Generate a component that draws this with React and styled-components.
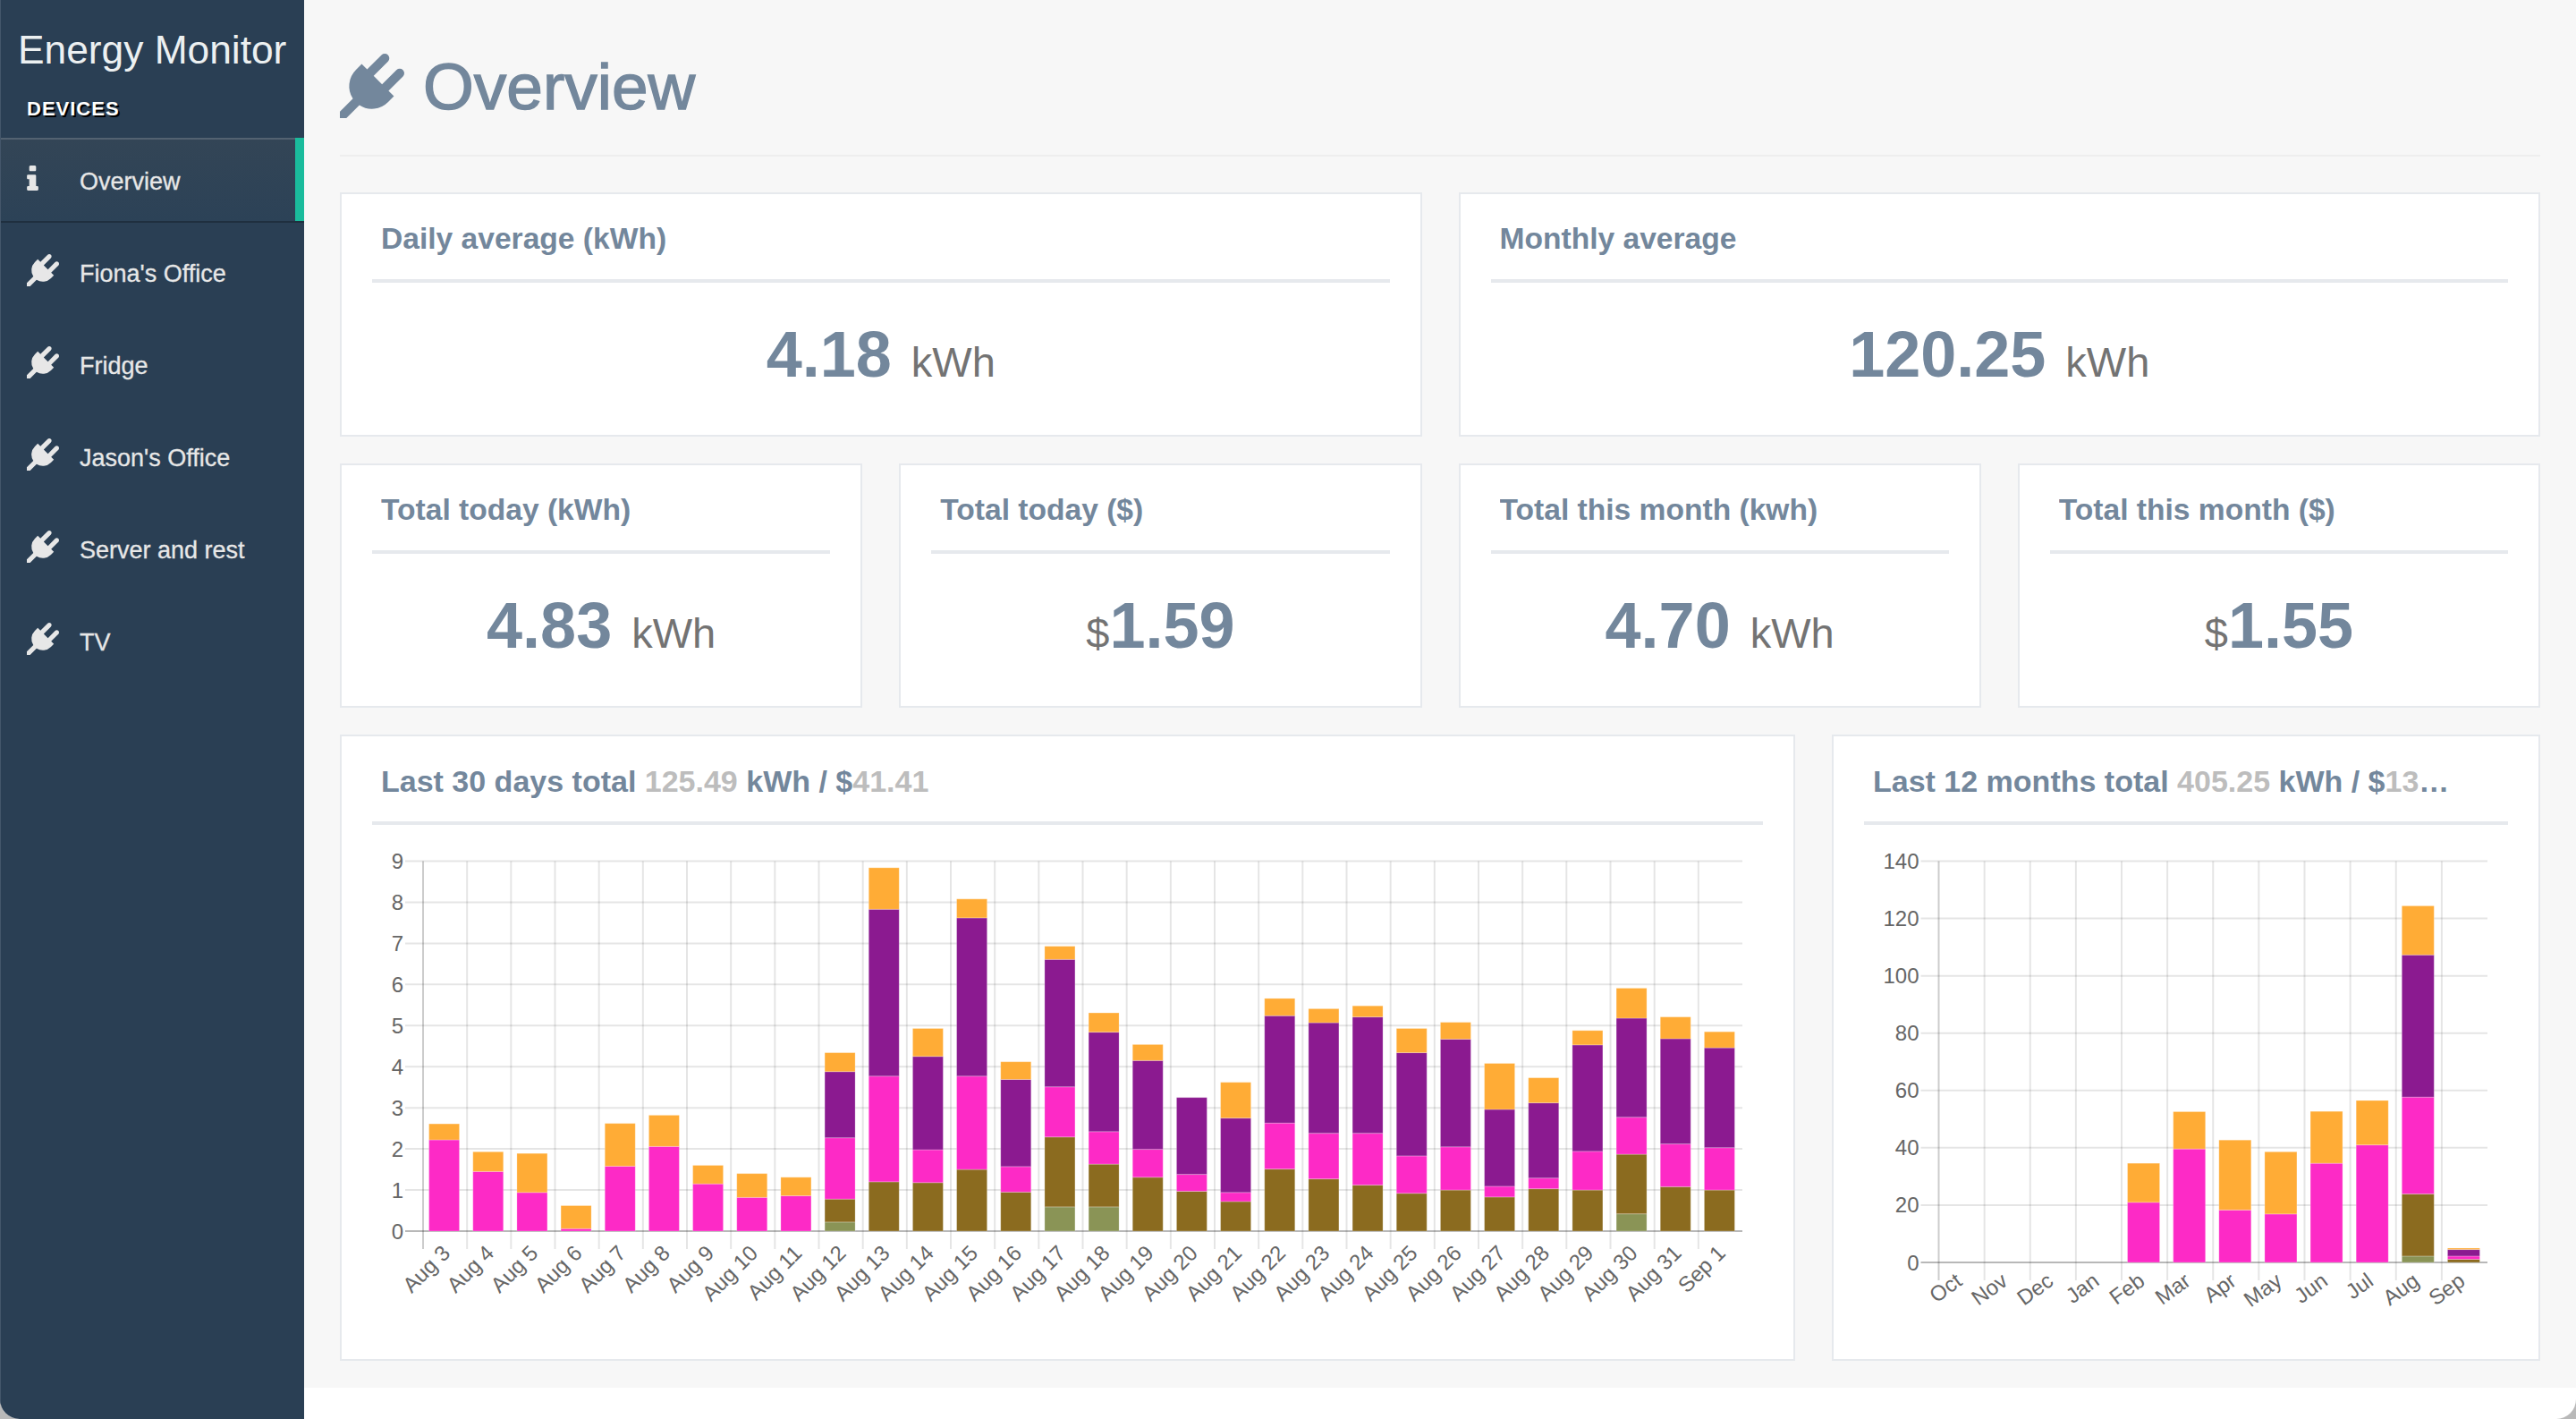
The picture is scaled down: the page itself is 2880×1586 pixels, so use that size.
import React from 'react'
import styled, { createGlobalStyle } from 'styled-components'

const PLUG = 'M1755 453q37 38 37 90.5t-37 90.5l-401 400 150 150-160 160q-163 163-389.5 186.5t-411.5-100.5l-362 362h-181v-181l362-362q-124-185-100.5-411.5t186.5-389.5l160-160 150 150 400-401q38-37 91-37t90 37 37 90.5-37 90.5l-400 401 234 234 401-400q38-37 91-37t90 37z'
const INFO = 'M1216 1344v128q0 26-19 45t-45 19h-512q-26 0-45-19t-19-45v-128q0-26 19-45t45-19h64v-384h-64q-26 0-45-19t-19-45v-128q0-26 19-45t45-19h384q26 0 45 19t19 45v576h64q26 0 45 19t19 45zm-128-1152v192q0 26-19 45t-45 19h-256q-26 0-45-19t-19-45v-192q0-26 19-45t45-19h256q26 0 45 19t19 45z'

const SERIES = ['#8a9456', '#8b6b1f', '#fd2ac6', '#8b1a90', '#ffac36']

// cumulative tops of each stack: green, brown, magenta, purple, orange
const DAYS = [
    ['Aug 3', 0, 0, 2.22, 2.22, 2.61],
    ['Aug 4', 0, 0, 1.45, 1.45, 1.93],
    ['Aug 5', 0, 0, 0.94, 0.94, 1.89],
    ['Aug 6', 0, 0, 0.06, 0.06, 0.62],
    ['Aug 7', 0, 0, 1.58, 1.58, 2.62],
    ['Aug 8', 0, 0, 2.06, 2.06, 2.82],
    ['Aug 9', 0, 0, 1.15, 1.15, 1.6],
    ['Aug 10', 0, 0, 0.82, 0.82, 1.4],
    ['Aug 11', 0, 0, 0.86, 0.86, 1.31],
    ['Aug 12', 0.22, 0.78, 2.27, 3.88, 4.34],
    ['Aug 13', 0, 1.2, 3.77, 7.83, 8.84],
    ['Aug 14', 0, 1.18, 1.98, 4.25, 4.93],
    ['Aug 15', 0, 1.5, 3.77, 7.62, 8.08],
    ['Aug 16', 0, 0.95, 1.57, 3.69, 4.12],
    ['Aug 17', 0.59, 2.29, 3.51, 6.61, 6.93],
    ['Aug 18', 0.59, 1.63, 2.42, 4.84, 5.31],
    ['Aug 19', 0, 1.31, 1.99, 4.15, 4.54],
    ['Aug 20', 0, 0.97, 1.38, 3.25, 3.25],
    ['Aug 21', 0, 0.72, 0.94, 2.75, 3.62],
    ['Aug 22', 0, 1.51, 2.63, 5.24, 5.66],
    ['Aug 23', 0, 1.27, 2.38, 5.07, 5.41],
    ['Aug 24', 0, 1.12, 2.38, 5.21, 5.48],
    ['Aug 25', 0, 0.92, 1.83, 4.34, 4.93],
    ['Aug 26', 0, 1, 2.05, 4.67, 5.08],
    ['Aug 27', 0, 0.83, 1.09, 2.96, 4.08],
    ['Aug 28', 0, 1.03, 1.29, 3.12, 3.73],
    ['Aug 29', 0, 1, 1.94, 4.53, 4.88],
    ['Aug 30', 0.42, 1.87, 2.77, 5.18, 5.91],
    ['Aug 31', 0, 1.08, 2.12, 4.68, 5.21],
    ['Sep 1', 0, 1, 2.03, 4.46, 4.85],
]

const MONTHS = [
    ['Oct', 0, 0, 0, 0, 0],
    ['Nov', 0, 0, 0, 0, 0],
    ['Dec', 0, 0, 0, 0, 0],
    ['Jan', 0, 0, 0, 0, 0],
    ['Feb', 0, 0, 20.96, 20.96, 34.6],
    ['Mar', 0, 0, 39.6, 39.6, 52.6],
    ['Apr', 0, 0, 18.3, 18.3, 42.7],
    ['May', 0, 0, 16.9, 16.9, 38.6],
    ['Jun', 0, 0, 34.6, 34.6, 52.7],
    ['Jul', 0, 0, 41, 41, 56.5],
    ['Aug', 2.2, 23.9, 57.7, 107.3, 124.4],
    ['Sep', 0, 1.1, 2.2, 4.5, 5],
]

const DEVICES = ["Fiona's Office", 'Fridge', "Jason's Office", 'Server and rest', 'TV']

function StackedChart({ rows, width, height, left, right, zero, max, step, barWidth, angle, labelDx, labelDy }) {
    const top = 40.5
    const pitch = (right - left) / rows.length
    const scale = (zero - top) / max
    const ticks = []
    for (let v = 0; v <= max; v += step) ticks.push(v)
    return (
        <ChartSvg width={width} height={height} viewBox={`0 0 ${width} ${height}`}>
            {ticks.map((v) => (
                <g key={v}>
                    <line
                        x1={left - 20}
                        x2={right}
                        y1={zero - v * scale}
                        y2={zero - v * scale}
                        stroke={v === 0 ? 'rgba(0,0,0,0.28)' : 'rgba(0,0,0,0.1)'}
                        strokeWidth="2"
                    />
                    <AxisText x={left - 22} y={zero - v * scale + 8.5} textAnchor="end">{v}</AxisText>
                </g>
            ))}
            {rows.map((row, i) => (
                <line
                    key={row[0]}
                    x1={left + pitch * i}
                    x2={left + pitch * i}
                    y1={top}
                    y2={zero + 20}
                    stroke={i === 0 ? 'rgba(0,0,0,0.2)' : 'rgba(0,0,0,0.1)'}
                    strokeWidth="2"
                />
            ))}
            {rows.map((row, i) => {
                const cx = left + pitch * (i + 0.5) - 1
                return (
                    <g key={row[0]}>
                        {SERIES.map((color, s) => {
                            const from = s === 0 ? 0 : row[s]
                            const to = row[s + 1]
                            if (to <= from) return null
                            return (
                                <rect
                                    key={color}
                                    x={cx - barWidth / 2}
                                    y={zero - to * scale}
                                    width={barWidth}
                                    height={(to - from) * scale}
                                    fill={color}
                                    stroke="rgba(255,255,255,0.25)"
                                    strokeWidth="1"
                                />
                            )
                        })}
                        <AxisText
                            textAnchor="end"
                            transform={`translate(${cx + labelDx} ${zero + labelDy}) rotate(${angle})`}
                        >
                            {row[0]}
                        </AxisText>
                    </g>
                )
            })}
        </ChartSvg>
    )
}

function StatPanel({ title, value, unit, prefix }) {
    return (
        <Panel $height={273}>
            <PanelHead>
                <PanelTitle>{title}</PanelTitle>
            </PanelHead>
            <Stat>
                {prefix && <Unit>{prefix}</Unit>}
                <Figure>{value}</Figure>
                {unit && <Unit $spaced>{unit}</Unit>}
            </Stat>
        </Panel>
    )
}

export default function App() {
    return (
        <>
            <GlobalStyle />
            <Shell>
                <Sidebar>
                    <Brand>Energy Monitor</Brand>
                    <MenuHeading>DEVICES</MenuHeading>
                    <Menu>
                        <MenuItem $active>
                            <IconSlot>
                                <svg width="13" height="28" viewBox="576 128 640 1408" fill="#e7e7e7">
                                    <path d={INFO} />
                                </svg>
                            </IconSlot>
                            Overview
                        </MenuItem>
                        {DEVICES.map((name) => (
                            <MenuItem key={name}>
                                <IconSlot>
                                    <svg width="36" height="36" viewBox="0 0 1792 1792" fill="#e7e7e7">
                                        <path d={PLUG} />
                                    </svg>
                                </IconSlot>
                                {name}
                            </MenuItem>
                        ))}
                    </Menu>
                </Sidebar>
                <Main>
                    <Content>
                        <PageHeader>
                            <HeaderIcon width="72" height="72" viewBox="0 0 1792 1792" fill="#73879c">
                                <path d={PLUG} />
                            </HeaderIcon>
                            <PageTitle>Overview</PageTitle>
                        </PageHeader>
                        <TopRow>
                            <StatPanel title="Daily average (kWh)" value="4.18" unit="kWh" />
                            <StatPanel title="Monthly average" value="120.25" unit="kWh" />
                        </TopRow>
                        <TotalsRow>
                            <StatPanel title="Total today (kWh)" value="4.83" unit="kWh" />
                            <StatPanel title="Total today ($)" value="1.59" prefix="$" />
                            <StatPanel title="Total this month (kwh)" value="4.70" unit="kWh" />
                            <StatPanel title="Total this month ($)" value="1.55" prefix="$" />
                        </TotalsRow>
                        <ChartsRow>
                            <Panel $height={700}>
                                <PanelHead>
                                    <ChartTitle>
                                        Last 30 days total <Muted>125.49</Muted> kWh / $<Muted>41.41</Muted>
                                    </ChartTitle>
                                </PanelHead>
                                <StackedChart
                                    rows={DAYS}
                                    width={1555}
                                    height={560}
                                    left={57}
                                    right={1532}
                                    zero={454}
                                    max={9}
                                    step={1}
                                    barWidth={34}
                                    angle={-45}
                                    labelDx={8}
                                    labelDy={26}
                                />
                            </Panel>
                            <Panel $height={700}>
                                <PanelHead>
                                    <ChartTitle $limit={654}>
                                        Last 12 months total <Muted>405.25</Muted> kWh / $<Muted>133.73</Muted>
                                    </ChartTitle>
                                </PanelHead>
                                <StackedChart
                                    rows={MONTHS}
                                    width={720}
                                    height={560}
                                    left={83.5}
                                    right={697}
                                    zero={489}
                                    max={140}
                                    step={20}
                                    barWidth={36}
                                    angle={-36}
                                    labelDx={3}
                                    labelDy={24}
                                />
                            </Panel>
                        </ChartsRow>
                    </Content>
                </Main>
            </Shell>
        </>
    )
}

const GlobalStyle = createGlobalStyle`
    html, body {
        margin: 0;
        height: 100%;
        background: #b9b9b9;
        overflow: hidden;
        font-family: "Liberation Sans", Arial, sans-serif;
    }
`
const Shell = styled.div`
    display: flex;
    width: 2880px;
    height: 1586px;
    overflow: hidden;
    border-radius: 0 0 22px 22px;
    background: #fff;
`
const Sidebar = styled.aside`
    flex: 0 0 340px;
    box-sizing: border-box;
    padding-top: 31px;
    background: #2a3f54;
    border-left: 1px solid #44566a;
`
const Brand = styled.div`
    padding-left: 19px;
    font-size: 44.3px;
    line-height: 50px;
    color: #ecf0f1;
    white-space: nowrap;
`
const MenuHeading = styled.h3`
    margin: 28px 0 19px;
    padding-left: 29px;
    font-size: 22px;
    line-height: 26px;
    font-weight: 700;
    letter-spacing: 1px;
    color: #fff;
    text-shadow: 2px 2px 0 #000;
`
const Menu = styled.ul`
    margin: 0;
    padding: 0;
    list-style: none;
`
const MenuItem = styled.li`
    display: flex;
    align-items: center;
    box-sizing: border-box;
    height: 93px;
    margin-bottom: 10px;
    padding: 6px 0 0 29px;
    font-size: 27px;
    color: #e7e7e7;
    -webkit-text-stroke: 0.3px #e7e7e7;
    ${(p) => p.$active && `
        background: linear-gradient(#334556, #2c4257);
        border-right: 10px solid #1abb9c;
        box-shadow: 0 2px 0 rgba(0, 0, 0, 0.25), inset 0 2px 0 rgba(255, 255, 255, 0.16);
    `}
`
const IconSlot = styled.span`
    display: flex;
    flex: 0 0 59px;
    margin-top: -10px;
`
const Main = styled.main`
    flex: 1;
`
const Content = styled.div`
    box-sizing: border-box;
    height: 1551px;
    padding: 57px 40px 0;
    background: #f7f7f7;
    color: #73879c;
`
const PageHeader = styled.header`
    display: flex;
    gap: 21px;
    height: 116px;
    margin-bottom: 40px;
    border-bottom: 2px solid #eeeeee;
`
const HeaderIcon = styled.svg`
    margin-top: 3px;
`
const PageTitle = styled.h1`
    margin: 0;
    font-size: 73px;
    line-height: 80px;
    font-weight: 400;
    -webkit-text-stroke: 1.4px #73879c;
`
const TopRow = styled.div`
    display: grid;
    grid-template-columns: repeat(2, 1fr);
    column-gap: 41px;
    margin-bottom: 30px;
`
const TotalsRow = styled(TopRow)`
    grid-template-columns: repeat(4, 1fr);
`
const ChartsRow = styled.div`
    display: grid;
    grid-template-columns: 1627px 1fr;
    column-gap: 41px;
`
const Panel = styled.section`
    box-sizing: border-box;
    height: ${(p) => p.$height}px;
    min-width: 0;
    padding: 0 34px;
    background: #fff;
    border: 2px solid #e6e9ed;
`
const PanelHead = styled.div`
    height: 65px;
    padding: 30px 0 0 10px;
    border-bottom: 4px solid #e6e9ed;
`
const PanelTitle = styled.h2`
    margin: 0;
    overflow: hidden;
    font-size: 33.6px;
    line-height: 40px;
    font-weight: 700;
    color: #73879c;
    white-space: nowrap;
    text-overflow: ellipsis;
`
const ChartTitle = styled(PanelTitle)`
    max-width: ${(p) => (p.$limit ? `${p.$limit}px` : 'none')};
    font-size: 34px;
`
const Muted = styled.span`
    color: #bdbdbd;
`
const Stat = styled.div`
    display: flex;
    align-items: baseline;
    justify-content: center;
    padding-top: 44px;
`
const Figure = styled.span`
    font-size: 72px;
    line-height: 72px;
    font-weight: 700;
`
const Unit = styled.span`
    margin-left: ${(p) => (p.$spaced ? '22px' : '0')};
    font-size: 47px;
    color: #737373;
`
const ChartSvg = styled.svg`
    display: block;
`
const AxisText = styled.text`
    font-size: 24px;
    fill: #666666;
`
